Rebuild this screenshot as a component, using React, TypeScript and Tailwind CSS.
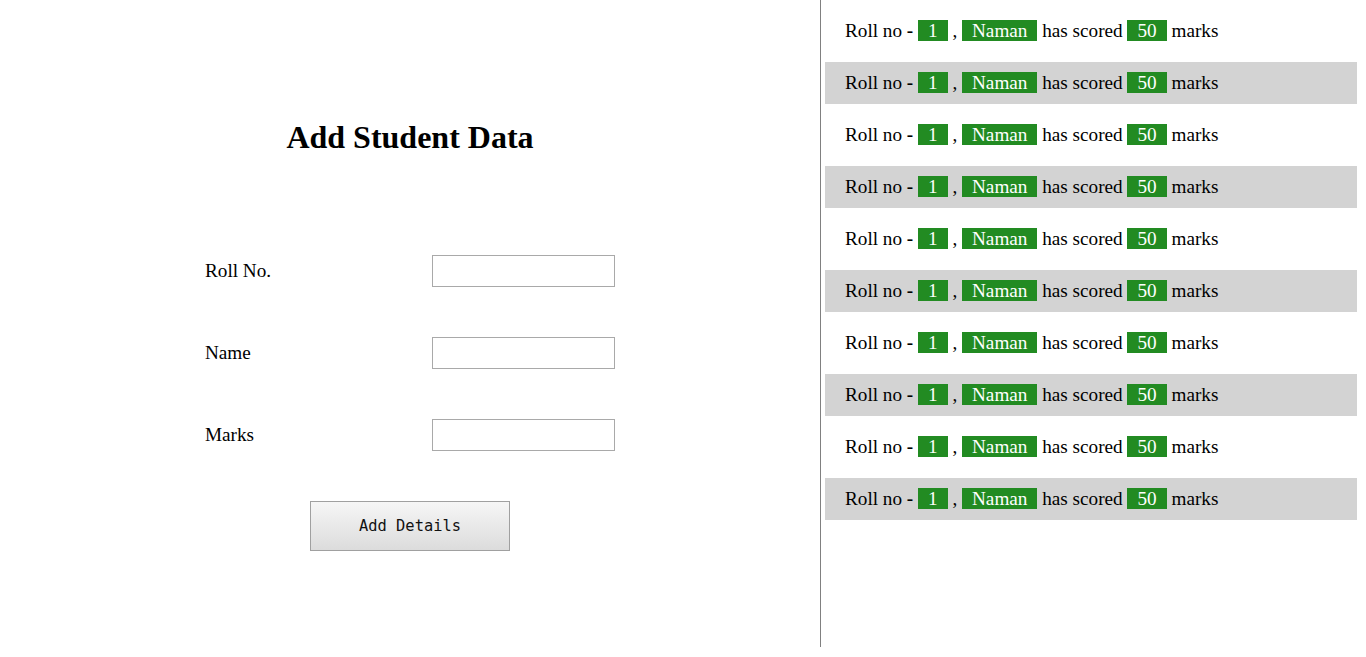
const students = Array.from({ length: 10 }, (_, i) => ({ id: i, roll: 1, name: "Naman", marks: 50 }));

function Badge({ children }: { children: React.ReactNode }) {
  return <span className="bg-[#228b22] text-white px-[10px]">{children}</span>;
}

export default function App() {
  return (
    <div className="flex w-[1366px] h-[657px] bg-white text-black font-['Liberation_Serif',serif] text-[19.2px]">
      <div className="w-[820px] h-[647px] flex flex-col items-center">
        <h1 className="mt-[119px] text-[32px] leading-[37px] font-bold">Add Student Data</h1>
        <div className="mt-[99px] w-[410px] flex flex-col gap-[50px]">
          {["Roll No.", "Name", "Marks"].map((label) => (
            <div key={label} className="flex items-center h-[32px]">
              <label className="w-[227px]">{label}</label>
              <input
                type="text"
                className="w-[183px] h-[32px] border border-[#a9a9a9] bg-white outline-none px-2"
              />
            </div>
          ))}
          <div className="flex justify-center">
            <button className="w-[200px] h-[50px] pt-[2px] border border-[#a0a0a0] bg-gradient-to-b from-[#f6f6f6] to-[#dcdcdc] font-['DejaVu_Sans_Mono',monospace] text-[15.4px] text-[#111]">
              Add Details
            </button>
          </div>
        </div>
      </div>
      <div className="h-[647px] border-l border-[#808080] pl-[4px] pr-[9px] flex-1">
        <div className="flex flex-col gap-[10px] pt-[10px]">
          {students.map((s, i) => (
            <div
              key={s.id}
              className={`h-[42px] flex items-center pl-[20px] whitespace-pre ${i % 2 === 1 ? "bg-[#d3d3d3]" : ""}`}
            >
              <span>
                Roll no <b>-</b> <Badge>{s.roll}</Badge> , <Badge>{s.name}</Badge> has scored <Badge>{s.marks}</Badge> marks
              </span>
            </div>
          ))}
        </div>
      </div>
    </div>
  );
}
